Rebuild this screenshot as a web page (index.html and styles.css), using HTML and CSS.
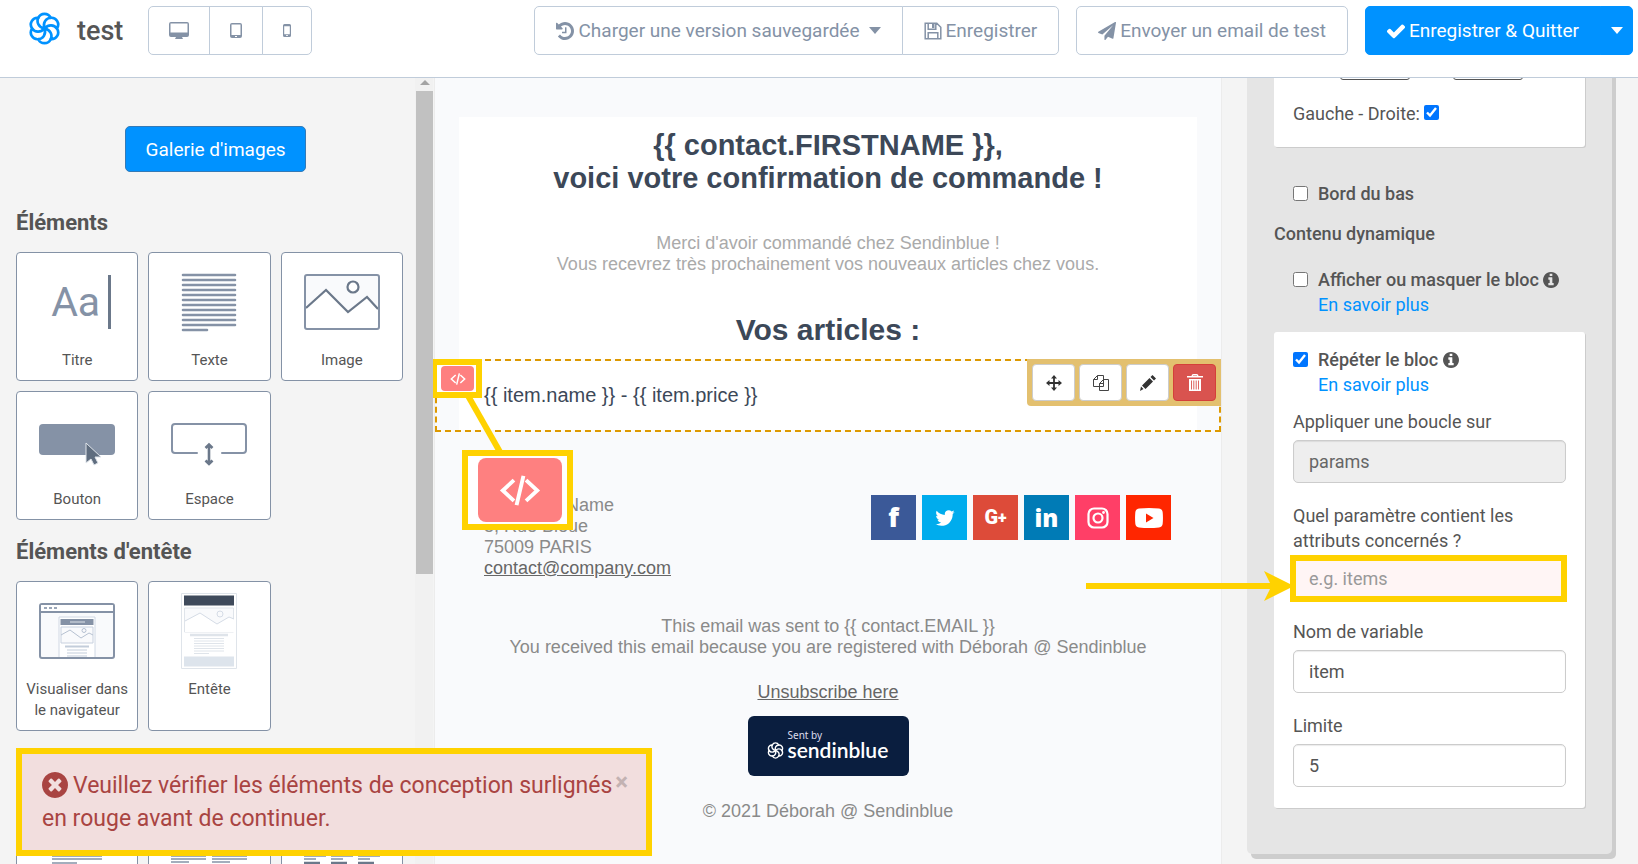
FILE: index.html
```html
<!DOCTYPE html>
<html lang="fr">
<head>
<meta charset="utf-8">
<meta name="viewport" content="width=device-width, initial-scale=1">
<title>test</title>
<link rel="stylesheet" href="styles.css">
</head>
<body>
<svg class="defs" aria-hidden="true">
  <symbol id="petal-logo" viewBox="-16 -16 32 32">
    <g fill="none" stroke="currentColor" stroke-width="2.6" stroke-linecap="round">
      <path d="M-6 -10.400A6.600 6.600 0 0 1 6 -10.400M0 -.8A7 7 0 0 1 6 -10.400"/>
      <path d="M-6 -10.400A6.600 6.600 0 0 1 6 -10.400M0 -.8A7 7 0 0 1 6 -10.400" transform="rotate(60)"/>
      <path d="M-6 -10.400A6.600 6.600 0 0 1 6 -10.400M0 -.8A7 7 0 0 1 6 -10.400" transform="rotate(120)"/>
      <path d="M-6 -10.400A6.600 6.600 0 0 1 6 -10.400M0 -.8A7 7 0 0 1 6 -10.400" transform="rotate(180)"/>
      <path d="M-6 -10.400A6.600 6.600 0 0 1 6 -10.400M0 -.8A7 7 0 0 1 6 -10.400" transform="rotate(240)"/>
      <path d="M-6 -10.400A6.600 6.600 0 0 1 6 -10.400M0 -.8A7 7 0 0 1 6 -10.400" transform="rotate(300)"/>
    </g>
  </symbol>
  <symbol id="info" viewBox="128 128 1536 1536"><path fill="currentColor" d="M1152 1376v-160q0-14-9-23t-23-9h-96v-512q0-14-9-23t-23-9h-320q-14 0-23 9t-9 23v160q0 14 9 23t23 9h96v320h-96q-14 0-23 9t-9 23v160q0 14 9 23t23 9h448q14 0 23-9t9-23zm-128-896v-160q0-14-9-23t-23-9h-192q-14 0-23 9t-9 23v160q0 14 9 23t23 9h192q14 0 23-9t9-23zm640 416q0 209-103 385.5t-279.5 279.5-385.5 103-385.5-103-279.5-279.5-103-385.5 103-385.5 279.5-279.5 385.5-103 385.5 103 279.5 279.5 103 385.5z"/></symbol>
  <symbol id="code" viewBox="0 0 48 36">
    <path d="M17 6L4 18l13 12M31 6l13 12-13 12M28 1l-8 34" fill="none" stroke="#fff" stroke-width="4.5"/>
  </symbol>
</svg>

<header class="topbar">
  <svg class="brand"><use href="#petal-logo"/></svg>
  <h1 class="doc-name">test</h1>
  <div class="group devices">
    <button class="btn" aria-label="Ordinateur"><svg width="20" height="17" viewBox="0 0 20 17"><path fill="currentColor" fill-rule="evenodd" d="M2 0h16q2 0 2 2v11q0 2-2 2h-5l1 2H6l1-2H2q-2 0-2-2V2q0-2 2-2zM1.500 1.500v9h17v-9z"/></svg></button>
    <button class="btn" aria-label="Tablette"><svg width="12" height="15" viewBox="0 0 12 15"><path fill="currentColor" fill-rule="evenodd" d="M2 0h8q2 0 2 2v11q0 2-2 2H2q-2 0-2-2V2q0-2 2-2zM1.500 1.500v10.500h9V1.500zM5 13h2v1H5z"/></svg></button>
    <button class="btn" aria-label="Mobile"><svg width="8" height="13" viewBox="0 0 8 13"><path fill="currentColor" fill-rule="evenodd" d="M1.500 0h5Q8 0 8 1.500v10Q8 13 6.500 13h-5Q0 13 0 11.500v-10Q0 0 1.500 0zM1.200 2.200v8h5.600v-8zM3.200 11h1.600v1H3.200z"/></svg></button>
  </div>
  <div class="actions">
    <div class="group">
      <button class="btn"><svg class="fa" viewBox="128 128 1536 1536"><path fill="currentColor" d="M1664 896q0 156-61 298t-164 245-245 164-298 61q-172 0-327-72.500t-264-204.500q-7-10-6.500-22.500t8.500-20.500l137-138q10-9 25-9 16 2 23 12 73 95 179 147t225 52q104 0 198.500-40.500t163.500-109.500 109.500-163.500 40.500-198.500-40.500-198.500-109.500-163.500-163.500-109.500-198.500-40.500q-98 0-188 35.500t-160 101.500l137 138q31 30 14 69-17 40-59 40h-448q-26 0-45-19t-19-45v-448q0-42 40-59 39-17 69 14l130 129q107-101 244.500-156.500t284.500-55.500q156 0 298 61t245 164 164 245 61 298zm-640-288v448q0 14-9 23t-23 9h-320q-14 0-23-9t-9-23v-64q0-14 9-23t23-9h224v-352q0-14 9-23t23-9h64q14 0 23 9t9 23z"/></svg>Charger une version sauvegardée<span class="caret"></span></button>
      <button class="btn"><svg class="fa" viewBox="0 0 18 18"><path fill="none" stroke="currentColor" stroke-width="1.500" d="M1.200 1.200h11.600l4 4v11.600H1.200zM4.200 16.700v-6h9.600v6M4.200 1.700v5.500h7.600V1.700"/><path fill="currentColor" d="M8 2h2.500v4H8z"/></svg>Enregistrer</button>
    </div>
    <button class="btn"><svg class="fa" viewBox="0 0 1792 1792"><path fill="currentColor" d="M1764 11q33 24 27 64l-256 1536q-5 29-32 45-14 8-31 8-11 0-24-5l-453-185-242 295q-18 23-49 23-13 0-22-4-19-7-30.500-23.500t-11.500-36.500v-349l864-1059-1069 925-395-162q-37-14-40-55-2-40 32-59l1664-960q15-9 32-9 20 0 36 11z"/></svg>Envoyer un email de test</button>
    <div class="group primary">
      <button class="btn"><svg class="fa" viewBox="128 128 1536 1536"><path fill="currentColor" d="M1671 566q0 40-28 68l-724 724-136 136q-28 28-68 28t-68-28l-136-136-362-362q-28-28-28-68t28-68l136-136q28-28 68-28t68 28l294 295 656-657q28-28 68-28t68 28l136 136q28 28 28 68z"/></svg>Enregistrer &amp; Quitter</button>
      <button class="btn more" aria-label="Plus d'options"><span class="caret"></span></button>
    </div>
  </div>
</header>

<div class="workspace">
  <aside class="library">
    <div class="library-body">
      <button class="gallery">Galerie d'images</button>
      <h2 class="section-title">Éléments</h2>
      <div class="tiles">
        <button class="tile"><span class="art title-art">Aa<i class="cursor"></i></span>Titre</button>
        <button class="tile"><span class="art"><svg width="56" height="60" viewBox="0 0 56 60"><path stroke="#8592a6" stroke-width="2.600" stroke-linecap="round" d="M2 3h52M2 8h52M2 13h52M2 18h52M2 23h52M2 28h52M2 33h52M2 38h52M2 43h52M2 48h52M2 53h52M2 58h24"/></svg></span>Texte</button>
        <button class="tile"><span class="art"><svg width="76" height="56" viewBox="0 0 76 56"><rect x="1" y="1" width="74" height="54" rx="2" fill="#f9fafc"/><path fill="#fff" d="M2 34l20-18 22 23 18-15 12 11v20H2z"/><path d="M2 34l20-18 22 22 19-15 11 12" fill="none" stroke="#6b788a" stroke-width="2.200"/><circle cx="49" cy="13" r="5.500" fill="#fff" stroke="#6b788a" stroke-width="2.200"/><rect x="1" y="1" width="74" height="54" rx="2" fill="none" stroke="#8592a6" stroke-width="2"/></svg></span>Image</button>
        <button class="tile"><span class="art"><svg width="76" height="50" viewBox="0 -6 76 50"><rect width="76" height="31" y="2" rx="4" fill="#8592a6"/><path d="M47 21v20l5-4 3 6 4-2-3-6h6z" fill="#5f6d7f" stroke="#dfe4ea" stroke-width="1"/></svg></span>Bouton</button>
        <button class="tile"><span class="art"><svg width="76" height="50" viewBox="0 -6 76 50"><path fill="none" stroke="#8592a6" stroke-width="2" stroke-linecap="round" d="M26 31H4q-3 0-3-3V5q0-3 3-3h68q3 0 3 3v23q0 3-3 3H51"/><path fill="none" stroke="#6b788a" stroke-width="2.600" d="M38 23v18M34.500 26l3.500-3.500 3.500 3.500M34.500 38.500l3.500 3.500 3.500-3.500"/></svg></span>Espace</button>
      </div>
      <h2 class="section-title">Éléments d'entête</h2>
      <div class="tiles">
        <button class="tile tall"><span class="art"><svg width="76" height="56" viewBox="0 0 76 56"><rect x="1" y="1" width="74" height="54" rx="2" fill="#f9fafc" stroke="#8592a6" stroke-width="2"/><path d="M2 2h72v6H2z" fill="#fff"/><path d="M2 9h72" stroke="#8592a6" stroke-width="2"/><path d="M5 5h3M10 5h3M15 5h3" stroke="#9aa6b8" stroke-width="2"/><path d="M20 54V14h36v40" fill="#fff" stroke="#d0d8e4"/><path d="M21.500 16h33v6h-33z" fill="#8592a6"/><path d="M31 19h15" stroke="#dfe4ea"/><path d="M22 24h32v16H22z" fill="#f9fafc" stroke="#c8d1df"/><path d="M22 32l9-5 11 8 8-5 4 2" fill="none" stroke="#b6c1d1"/><circle cx="45" cy="27.500" r="2" fill="none" stroke="#b6c1d1"/><path d="M26 43.500h24" stroke="#c3cdda" stroke-width="2"/><path d="M28 47h20M28 50h20M28 53h20" stroke="#c3cdda"/></svg></span>Visualiser dans le navigateur</button>
        <button class="tile tall"><span class="art"><svg width="56" height="76" viewBox="0 0 56 76"><path d="M.5.500h55v75H.5z" fill="#fff" stroke="#dfe4ea"/><path d="M3 2.500h50v10H3z" fill="#3f4a5b"/><path d="M3.500 15h49v24h-49z" fill="#f9fafc" stroke="#dfe4ea"/><path d="M4 28l15-8 17 11 12-7 5 2v13H4z" fill="#fff"/><path d="M4 28l15-8 17 11 12-7 5 2" fill="none" stroke="#d5dce6"/><circle cx="39" cy="21" r="3" fill="none" stroke="#d5dce6"/><path d="M9 42h38" stroke="#dfe4ea" stroke-width="2.500"/><path d="M13 45.500h30M13 48h30M13 50.500h30M13 53h30M13 55.500h30M13 58h30M13 60.500h15" stroke="#dfe4ea"/><path d="M3 63.500h50v10H3z" fill="#dde4ec"/></svg></span>Entête</button>
      </div>
      <div class="tiles hidden-row">
        <button class="tile" aria-label="Bloc texte"><span class="art"><svg width="50" height="40" viewBox="0 0 50 40"><path stroke="#8592a6" stroke-width="1.600" d="M0 1h50M0 4h50M0 8h25"/></svg></span></button>
        <button class="tile" aria-label="Bloc deux colonnes"><span class="art"><svg width="76" height="40" viewBox="0 0 76 40"><path stroke="#8592a6" stroke-width="1.600" d="M0 1h35M0 4h35M0 7h18M41 1h35M41 4h35M41 7h18"/></svg></span></button>
        <button class="tile" aria-label="Bloc trois colonnes"><span class="art"><svg width="76" height="40" viewBox="0 0 76 40"><path stroke="#8592a6" stroke-width="1.600" d="M0 1h22M27 1h22M54 1h22M0 4h12M27 4h12M54 4h12"/><path stroke="#6b788a" stroke-width="2.400" d="M0 8h16M27 8h16M54 8h16"/></svg></span></button>
      </div>
    </div>
    <div class="scrollbar"><span class="scroll-up"></span><span class="thumb"></span></div>
    <div class="alert" role="alert">
      <p><svg class="alert-icon" viewBox="128 128 1536 1536"><path fill="currentColor" d="M1277 1122q0-26-19-45l-181-181 181-181q19-19 19-45 0-27-19-46l-90-90q-19-19-46-19-26 0-45 19l-181 181-181-181q-19-19-45-19-27 0-46 19l-90 90q-19 19-19 46 0 26 19 45l181 181-181 181q-19 19-19 45 0 27 19 46l90 90q19 19 46 19 26 0 45-19l181-181 181 181q19 19 45 19 27 0 46-19l90-90q19-19 19-46zm387-226q0 209-103 385.500t-279.500 279.500-385.500 103-385.500-103-279.500-279.500-103-385.500 103-385.500 279.500-279.500 385.500-103 385.500 103 279.500 279.500 103 385.500z"/></svg>Veuillez vérifier les éléments de conception surlignés en rouge avant de continuer.</p>
      <button class="close" aria-label="Fermer">×</button>
    </div>
  </aside>

  <main class="canvas">
    <section class="sheet">
      <h2 class="headline">{{ contact.FIRSTNAME }},<br>voici votre confirmation de commande !</h2>
      <p class="intro">Merci d'avoir commandé chez Sendinblue !<br>Vous recevrez très prochainement vos nouveaux articles chez vous.</p>
      <h2>Vos articles :</h2>
    </section>
    <section class="block">
      <p class="item-line">{{ item.name }} - {{ item.price }}</p>
      <div class="tools">
        <button class="tool" aria-label="Déplacer"><svg width="16" height="16" viewBox="0 0 16 16"><path d="M8 1.500v13M1.500 8h13" stroke="#333" stroke-width="1.800"/><path fill="#333" d="M8 0l3 3.500H5zM8 16l3-3.500H5zM0 8l3.500-3v6zM16 8l-3.500-3v6z"/></svg></button>
        <button class="tool" aria-label="Dupliquer"><svg width="16" height="16" viewBox="0 0 16 16"><path fill="#fff" stroke="#444" d="M4.500.500h6v11h-10v-7zM4.500.500v4h-4M10.500 4.500h5v11h-9v-7zM10.500 4.500v4h-4"/></svg></button>
        <button class="tool" aria-label="Modifier"><svg width="16" height="16" viewBox="0 0 16 16"><path fill="#333" d="M0 16l1-4.500L3.500 14zM2 10.500l7.500-7.500 3.500 3.500L5.500 14zM10.500 2l2-2L16 3.500l-2 2z"/></svg></button>
        <button class="tool danger" aria-label="Supprimer"><svg width="16" height="17" viewBox="0 0 16 17"><path fill="#fff" d="M0 2h4.500q0-2 2-2h3q2 0 2 2H16v1.500H0zM6 1.500V2h4v-.5zM2 5h12v12H2z" fill-rule="evenodd"/><path stroke="#d9534f" stroke-width=".9" d="M4.500 6.500v9M6.800 6.500v9M9.200 6.500v9M11.500 6.500v9"/></svg></button>
      </div>
      <div class="mark small"><span class="chip"><svg><use href="#code"/></svg></span></div>
      <svg class="connector" width="44" height="60" viewBox="0 0 44 60"><path d="M4 0l33 58" stroke="#ffd200" stroke-width="6"/></svg>
      <div class="mark large"><span class="chip"><svg><use href="#code"/></svg></span></div>
    </section>
    <section class="contact">
      <address>Company Name<br>5, Rue Bleue<br>75009 PARIS<br><a href="#">contact@company.com</a></address>
      <nav class="social">
        <a class="fb" href="#">f</a>
        <a class="tw" href="#" aria-label="Twitter"><svg width="22" height="22" viewBox="0 0 1792 1792"><path fill="#fff" d="M1684 408q-67 98-162 167 1 14 1 42 0 130-38 259.500t-115.500 248.500-184.500 210.500-258 146-323 54.500q-271 0-496-145 35 4 78 4 225 0 401-138-105-2-188-64.500t-114-159.500q33 5 61 5 43 0 85-11-112-23-185.500-111.500t-73.500-205.500v-4q68 38 146 41-66-44-105-115t-39-154q0-88 44-163 121 149 294.500 238.500t371.500 99.500q-8-38-8-74 0-134 94.500-228.500t228.500-94.500q140 0 236 102 109-21 205-78-37 115-142 178 93-10 186-50z"/></svg></a>
        <a class="gp" href="#">G<span>+</span></a>
        <a class="li" href="#">in</a>
        <a class="ig" href="#" aria-label="Instagram"><svg width="22" height="22" viewBox="0 0 22 22"><g fill="none" stroke="#fff" stroke-width="2.200"><rect x="1.500" y="1.500" width="19" height="19" rx="5.500"/><circle cx="11" cy="11" r="4.500"/></g><circle cx="16.500" cy="5.500" r="1.400" fill="#fff"/></svg></a>
        <a class="yt" href="#" aria-label="YouTube"><svg width="28" height="20" viewBox="0 0 28 20"><path fill="#fff" fill-rule="evenodd" d="M4 .500q10-1 20 0 3.500.500 3.700 4 .500 5.500 0 11-.2 3.500-3.700 4-10 1-20 0-3.500-.5-3.700-4-.5-5.500 0-11 .2-3.500 3.700-4zM11 5.500v9l7.500-4.500z"/></svg></a>
      </nav>
    </section>
    <footer class="legal">
      <p>This email was sent to {{ contact.EMAIL }}<br>You received this email because you are registered with Déborah @ Sendinblue</p>
      <p class="unsubscribe"><a href="#">Unsubscribe here</a></p>
      <div class="badge"><span class="sent">Sent by</span><span class="name"><svg><use href="#petal-logo"/></svg>sendinblue</span></div>
      <p>© 2021 Déborah @ Sendinblue</p>
    </footer>
  </main>

  <aside class="settings">
    <form class="panel">
      <div class="card">
        <div class="dims"><input type="text" aria-label="Haut"><input type="text" aria-label="Bas"></div>
        <label class="inline">Gauche - Droite: <input type="checkbox" checked></label>
      </div>
      <label class="check bottom-edge"><input type="checkbox">Bord du bas</label>
      <h3>Contenu dynamique</h3>
      <label class="check"><input type="checkbox"><span>Afficher ou masquer le bloc <svg class="info"><use href="#info"/></svg></span></label>
      <a class="learn outer" href="#">En savoir plus</a>
      <div class="card repeat">
        <label class="check"><input type="checkbox" checked><span>Répéter le bloc <svg class="info"><use href="#info"/></svg></span></label>
        <a class="learn" href="#">En savoir plus</a>
        <div class="field first">
          <label for="loop">Appliquer une boucle sur</label>
          <input id="loop" type="text" value="params" disabled>
        </div>
        <div class="field required">
          <label for="param">Quel paramètre contient les attributs concernés ?</label>
          <div class="highlight">
            <input id="param" type="text" placeholder="e.g. items">
            <svg class="arrow" width="208" height="30" viewBox="0 0 208 30"><path d="M0 12h184L178 0l30 15-30 15 6-12H0z" fill="#ffd200"/></svg>
          </div>
        </div>
        <div class="field after">
          <label for="var">Nom de variable</label>
          <input id="var" type="text" value="item">
        </div>
        <div class="field">
          <label for="limit">Limite</label>
          <input id="limit" type="text" value="5">
        </div>
      </div>
    </form>
  </aside>
</div>
</body>
</html>
```
FILE: styles.css
```css
* { box-sizing: border-box; }
body { margin: 0; height: 100vh; overflow: hidden; display: flex; flex-direction: column; background: #f4f4f4; color: #555; font: 18px/25px Roboto, sans-serif; }
h1, h2, h3, p { margin: 0; }
button, input { font: inherit; color: inherit; }
svg { flex: none; }
.defs { position: absolute; width: 0; height: 0; }

.topbar { position: relative; z-index: 3; flex: none; display: flex; align-items: flex-start; height: 78px; padding: 6px 5px 0 28px; background: #fff; border-bottom: 1px solid #c0ccda; }
.brand { width: 33px; height: 33px; margin-top: 6px; color: #0092ff; }
.doc-name { margin: 0 25px 0 16px; font-size: 27px; font-weight: 500; line-height: 50px; }
.group { display: flex; }
.btn { display: flex; align-items: center; justify-content: center; height: 49px; padding: 0 20px; background: #fff; border: 1px solid #c0ccda; border-radius: 5px; color: #8492a6; font-size: 19px; white-space: nowrap; }
.group .btn:not(:first-child) { margin-left: -1px; border-top-left-radius: 0; border-bottom-left-radius: 0; }
.group .btn:not(:last-child) { border-top-right-radius: 0; border-bottom-right-radius: 0; }
.fa { width: 18px; height: 18px; margin-right: 4px; }
.caret { margin-left: 9px; border: 6px solid transparent; border-top: 7px solid; border-bottom: 0; }
.actions { display: flex; gap: 17px; margin-left: auto; }
.actions .btn { padding: 0 21px; }
.primary .btn { background: #0092ff; border-color: #0092ff; color: #fff; }
.actions .more { width: 33px; padding: 0; }
.more .caret { margin: 0; }

.workspace { flex: 1; min-height: 0; display: grid; grid-template-columns: 434px minmax(0, 1fr) 416px; }
.library { position: relative; z-index: 2; display: flex; min-height: 0; }
.library-body { flex: 1; min-width: 0; display: flex; flex-direction: column; padding: 48px 0 0 16px; overflow: hidden; }
.gallery { flex: none; align-self: center; height: 46px; margin-bottom: 38px; padding: 0 19px; background: #0092ff; border: 1px solid #337ab7; border-radius: 5px; color: #fff; font-size: 19px; }
.section-title { margin-bottom: 16px; font-size: 22px; line-height: 26px; font-weight: 700; }
.tiles { flex: none; display: grid; grid-template-columns: repeat(3, 1fr); gap: 10px; margin: 0 12px 19px 0; }
.tile { display: flex; flex-direction: column; align-items: center; height: 129px; padding: 11px 6px 0; background: #fff; border: 1px solid #8492a6; border-radius: 4px; font-size: 15px; line-height: 21px; }
.tall { height: 150px; }
.art { display: flex; align-items: center; height: 76px; margin-bottom: 10px; }
.title-art { padding-left: 8px; color: #8592a6; font-size: 41px; }
.cursor { width: 3px; height: 54px; margin-left: 8px; background: #6b788a; }
.hidden-row .tile { padding-top: 0; }
.hidden-row { margin-top: 62px; }
.hidden-row .art { align-items: flex-start; margin-top: 42px; }
.scrollbar { width: 18px; margin-right: 1px; padding: 2px 0 0 1px; background: #f1f1f1; display: flex; flex-direction: column; align-items: center; }
.scroll-up { margin-bottom: 6px; border: 5px solid transparent; border-bottom: 5px solid #a3a3a3; border-top: 0; }
.thumb { width: 17px; height: 483px; background: #c1c1c1; }
.alert { position: absolute; left: 16px; bottom: 8px; width: 636px; display: flex; align-items: flex-start; padding: 15px 18px 15px 20px; background: #f2dede; border: 6px solid #ffd200; color: #a94442; font-size: 23px; line-height: 33px; }
.alert p { flex: 1; }
.alert-icon { width: 26px; height: 26px; margin-right: 5px; vertical-align: -5px; }
.close { padding: 0; background: none; border: 0; color: #c3b2b2; font-size: 24px; font-weight: 700; line-height: 26px; }

.canvas { position: relative; z-index: 1; background: #f9fafc; border: solid #ececec; border-width: 0 1px; padding-top: 39px; color: #8a8a8a; font: 18px/21px "Liberation Sans", Arial, sans-serif; }
.canvas h2 { font-size: 30px; line-height: 33px; color: #3c4858; }
.canvas .headline { font-size: 29px; }
.sheet { margin: 0 24px; padding: 12px 0 13px; background: #fff; text-align: center; }
.intro { margin: 38px 0; color: #aaa; }
.block { position: relative; display: flex; align-items: center; height: 73px; border: 2px dashed #dd9900; padding: 0 22px; }
.item-line { flex: 1; align-self: stretch; padding: 22px 24px 0 25px; background: #fff; color: #3c4858; font-size: 20px; line-height: 24px; }
.tools { position: absolute; top: -2px; right: -2px; display: flex; gap: 4px; padding: 5px; background: #e3c06f; border-bottom-left-radius: 4px; }
.tool { display: grid; place-items: center; width: 43px; height: 37px; padding: 0; background: #fff; border: 1px solid #ccc; border-radius: 4px; }
.danger { background: #d9534f; border-color: #d43f3a; }
.mark { position: absolute; display: grid; background: #fff; border: 6px solid #ffd200; }
.chip { display: grid; place-items: center; background: #fe8080; border-radius: 4px; }
.small { left: -6px; top: -2px; width: 51px; height: 39px; padding: 1px 2px 1px 4px; }
.small svg { width: 16px; height: 12px; }
.connector { position: absolute; left: 26px; top: 33px; }
.large { left: 25px; top: 89px; width: 111px; height: 80px; padding: 2px 5px 2px 10px; }
.large .chip { border-radius: 8px; }
.large svg { width: 42px; height: 31px; }
.contact { display: flex; justify-content: space-between; align-items: flex-start; padding: 63px 50px 37px 49px; }
.contact address { font-style: normal; }
.canvas a { color: #666; }
.social { display: flex; gap: 6px; }
.social a { display: flex; align-items: center; justify-content: center; width: 45px; height: 45px; color: #fff; text-decoration: none; font-weight: 900; font-family: Roboto, sans-serif; }
.canvas .social a { color: #fff; }
.social .fb { background: #3b5998; font-size: 26px; font-family: "Open Sans", sans-serif; }
.tw { background: #00aced; }
.social .gp { background: #dd4b39; font-size: 20px; }
.gp span { font-size: 16px; }
.social .li { background: #007bb6; font-size: 24px; font-family: "Open Sans", sans-serif; }
.ig { background: #ff3f67; }
.yt { background: #ff2600; }
.legal { display: flex; flex-direction: column; align-items: center; text-align: center; }
.unsubscribe { margin: 24px 0 13px; }
.badge { display: flex; flex-direction: column; justify-content: center; width: 161px; height: 60px; margin-bottom: 25px; padding: 0 20px 4px 19px; background: #0a1e3f; border-radius: 6px; color: #fff; font-family: Lato, sans-serif; text-align: left; }
.sent { padding-left: 21px; font-family: "Noto Sans", sans-serif; font-size: 10px; line-height: 12px; color: #dde; }
.name { display: flex; align-items: center; gap: 4px; font-size: 21px; line-height: 18px; font-weight: 600; }
.name svg { width: 17px; height: 17px; }

.settings { position: relative; z-index: 2; min-height: 0; padding: 0 26px 0 25px; }
.panel { margin-top: -31px; padding: 0 27px 46px; background: #e5e5e5; border-radius: 5px; box-shadow: 4px 5px 0 #cdcdcd; }
.card { padding: 0 19px 21px; background: #fff; border-radius: 3px; box-shadow: 1px 1px 0 #ccc; }
.dims { display: flex; gap: 43px; padding-left: 47px; margin-bottom: 21px; }
.dims input { width: 70px; height: 33px; border: 1px solid #555; border-radius: 3px; }
.inline { display: block; }
input[type="checkbox"] { width: 15px; height: 15px; margin: 0; accent-color: #0075ff; }
.check { display: flex; align-items: center; gap: 10px; font-weight: 500; }
.panel > .check { padding-left: 19px; }
.bottom-edge { margin-top: 34px; }
.panel h3 { margin: 15px 0 21px; font-size: 18px; font-weight: 500; }
.info { width: 16px; height: 16px; vertical-align: -2px; }
.learn { display: block; margin-left: 25px; color: #0092ff; text-decoration: none; }
.outer { margin: 0 0 15px 44px; }
.repeat { padding-top: 15px; }
.field { display: grid; gap: 6px; margin-top: 20px; }
.first { margin-top: 12px; }
.required { gap: 2px; }
.after { margin-top: 17px; }
.field input { width: 100%; height: 43px; padding: 0 15px; background: #fff; border: 1px solid #ccc; border-radius: 5px; box-shadow: inset 0 1px 1px rgba(0, 0, 0, .08); }
.field input:disabled { background: #eee; color: #666; }
.highlight { position: relative; display: grid; margin: 0 -1px 0 -3px; }
.highlight input { height: 47px; padding: 0 13px; background: #fff5f5; border: 6px solid #ffd200; border-radius: 0; box-shadow: none; }
.highlight input::placeholder { color: #999; }
.arrow { position: absolute; right: calc(100% - 4px); top: 16px; }
```
